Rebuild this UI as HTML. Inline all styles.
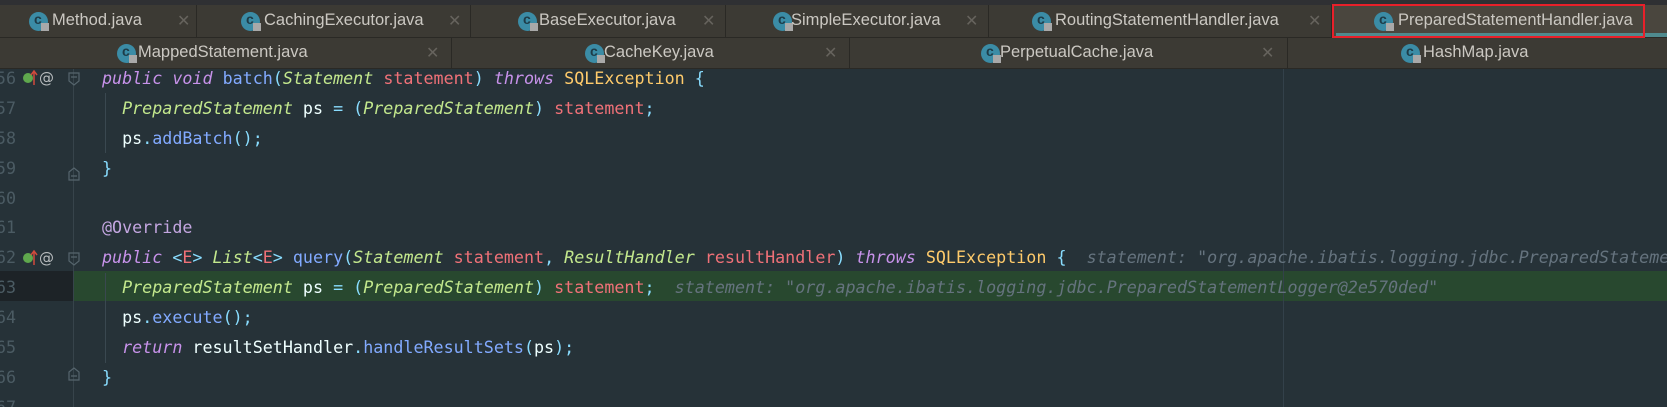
<!DOCTYPE html>
<html><head><meta charset="utf-8"><style>
*{margin:0;padding:0;box-sizing:border-box}
body{width:1667px;height:407px;overflow:hidden;background:#263238;position:relative;font-family:"Liberation Sans",sans-serif}
.top{position:absolute;left:0;top:0;width:1667px;height:5px;background:#2f3033}
.row{position:absolute;left:0;width:1667px;background:#3c3a34;border-bottom:1px solid #2a2925}
.tab{position:absolute;top:0;height:100%;border-right:1px solid #2a2925}
.t{position:absolute;font-size:16.5px;color:#cbc8c2;white-space:nowrap}
.x{position:absolute;color:#66635d;font-size:16px}
.ic{position:absolute;width:19px;height:19px;border-radius:50%;background:#3b8ca6}
.ic::before{content:"c";position:absolute;left:5px;top:-1px;font:bold 14px "Liberation Sans",sans-serif;color:#1e3c48}
.ic::after{content:"";position:absolute;left:12px;top:11px;width:8px;height:8px;background:#a9a9a9}
.code{position:absolute;left:0;top:64px;width:1667px;height:343px;overflow:hidden;font-family:"DejaVu Sans Mono",monospace;font-size:16.7px}
.ln{height:29.9px;line-height:29.9px;white-space:pre;position:relative}
.num{position:absolute;left:-8px;width:24px;text-align:right;color:#4b5b63}
.c{position:absolute;left:102px;color:#eeffff;white-space:pre}
.k{color:#c792ea;font-style:italic}.ty{color:#c3e88d;font-style:italic}.p{color:#f07178}.m{color:#82aaff}.pu{color:#89ddff}.y{color:#ffcb6b}.h{color:#65737e;font-style:italic}
</style></head><body>
<div class="top"></div>
<div class="row" style="top:5px;height:33px">
 <div class="tab" style="left:0;width:197px"><div class="ic" style="left:29px;top:7px"></div><div class="t" style="left:52px;top:6px">Method.java</div><div class="x" style="left:177px;top:6px">✕</div></div>
 <div class="tab" style="left:197px;width:274px"><div class="ic" style="left:44px;top:7px"></div><div class="t" style="left:67px;top:6px">CachingExecutor.java</div><div class="x" style="left:251px;top:6px">✕</div></div>
 <div class="tab" style="left:471px;width:255px"><div class="ic" style="left:47px;top:7px"></div><div class="t" style="left:68px;top:6px">BaseExecutor.java</div><div class="x" style="left:231px;top:6px">✕</div></div>
 <div class="tab" style="left:726px;width:263px"><div class="ic" style="left:47px;top:7px"></div><div class="t" style="left:65px;top:6px">SimpleExecutor.java</div><div class="x" style="left:239px;top:6px">✕</div></div>
 <div class="tab" style="left:989px;width:343px"><div class="ic" style="left:43px;top:7px"></div><div class="t" style="left:66px;top:6px">RoutingStatementHandler.java</div><div class="x" style="left:319px;top:6px">✕</div></div>
 <div class="tab" style="left:1332px;width:335px;background:#4a463e;border:none"><div style="position:absolute;left:4px;right:0;bottom:0;height:4px;background:#4f8a8e"></div><div class="ic" style="left:42px;top:7px"></div><div class="t" style="left:66px;top:6px">PreparedStatementHandler.java</div></div>
</div>
<div style="position:absolute;left:1332px;top:4px;width:313px;height:34px;border:2px solid #e8202a"></div>
<div class="row" style="top:38px;height:31px">
 <div class="tab" style="left:0;width:452px"><div class="ic" style="left:117px;top:6px"></div><div class="t" style="left:138px;top:5px">MappedStatement.java</div><div class="x" style="left:426px;top:5px">✕</div></div>
 <div class="tab" style="left:452px;width:398px"><div class="ic" style="left:133px;top:6px"></div><div class="t" style="left:152px;top:5px">CacheKey.java</div><div class="x" style="left:372px;top:5px">✕</div></div>
 <div class="tab" style="left:850px;width:438px"><div class="ic" style="left:131px;top:6px"></div><div class="t" style="left:150px;top:5px">PerpetualCache.java</div><div class="x" style="left:411px;top:5px">✕</div></div>
 <div class="tab" style="left:1288px;width:379px;border:none"><div class="ic" style="left:113px;top:6px"></div><div class="t" style="left:135px;top:5px">HashMap.java</div></div>
</div>
<div style="position:absolute;left:0;top:271px;width:73px;height:30px;background:#1d2327"></div>
<div style="position:absolute;left:73px;top:271px;width:1594px;height:30px;background:#28482f"></div>
<div style="position:absolute;left:73px;top:69px;width:1px;height:338px;background:#37444b"></div>
<div style="position:absolute;left:1283px;top:69px;width:1px;height:338px;background:#33414a"></div>
<div style="position:absolute;left:105px;top:93px;width:1px;height:60px;background:#3a4850"></div>
<div style="position:absolute;left:105px;top:273px;width:1px;height:90px;background:#3a4850"></div>
<svg style="position:absolute;left:0;top:63px" width="100" height="330">
 <g fill="none" stroke="#56656d" stroke-width="1.2"><path d="M69 10h10v8l-5 4l-5-4z M71 14h6"/><path d="M69 109l5-4l5 4v8h-10z M71 113h6"/><path d="M69 190h10v8l-5 4l-5-4z M71 194h6"/><path d="M69 309l5-4l5 4v8h-10z M71 313h6"/></g>
 <circle cx="28" cy="15" r="5" fill="#5fa84d"/><circle cx="28" cy="195" r="5" fill="#5fa84d"/>
 <path d="M34 22v-13M31 12l3-4l3 4" stroke="#d04a3c" stroke-width="1.5" fill="none"/><path d="M34 202v-13M31 192l3-4l3 4" stroke="#d04a3c" stroke-width="1.5" fill="none"/>
 <text x="39" y="20" fill="#b8bcbe" font-family="DejaVu Sans" font-size="15">@</text><text x="39" y="200" fill="#b8bcbe" font-family="DejaVu Sans" font-size="15">@</text>
</svg>
<div class="code">
<div class="ln"><span class="num">56</span><span class="c"><span class="k">public void</span> <span class="m">batch</span><span class="pu">(</span><span class="ty">Statement</span> <span class="p">statement</span><span class="pu">)</span> <span class="k">throws</span> <span class="y">SQLException</span> <span class="pu">{</span></span></div>
<div class="ln"><span class="num">57</span><span class="c">  <span class="ty">PreparedStatement</span> ps <span class="pu">=</span> <span class="pu">(</span><span class="ty">PreparedStatement</span><span class="pu">)</span> <span class="p">statement</span><span class="pu">;</span></span></div>
<div class="ln"><span class="num">58</span><span class="c">  ps<span class="pu">.</span><span class="m">addBatch</span><span class="pu">();</span></span></div>
<div class="ln"><span class="num">59</span><span class="c"><span class="pu">}</span></span></div>
<div class="ln"><span class="num">60</span></div>
<div class="ln"><span class="num">61</span><span class="c"><span style="color:#c3a6e0">@Override</span></span></div>
<div class="ln"><span class="num">62</span><span class="c"><span class="k">public</span> <span class="pu">&lt;</span><span class="p">E</span><span class="pu">&gt;</span> <span class="ty">List</span><span class="pu">&lt;</span><span class="p">E</span><span class="pu">&gt;</span> <span class="m">query</span><span class="pu">(</span><span class="ty">Statement</span> <span class="p">statement</span><span class="pu">,</span> <span class="ty">ResultHandler</span> <span class="p">resultHandler</span><span class="pu">)</span> <span class="k">throws</span> <span class="y">SQLException</span> <span class="pu">{</span>  <span class="h">statement: "org.apache.ibatis.logging.jdbc.PreparedStatementLogger@2e570ded"</span></span></div>
<div class="ln"><span class="num">63</span><span class="c">  <span class="ty">PreparedStatement</span> ps <span class="pu">=</span> <span class="pu">(</span><span class="ty">PreparedStatement</span><span class="pu">)</span> <span class="p">statement</span><span class="pu">;</span>  <span class="h">statement: "org.apache.ibatis.logging.jdbc.PreparedStatementLogger@2e570ded"</span></span></div>
<div class="ln"><span class="num">64</span><span class="c">  ps<span class="pu">.</span><span class="m">execute</span><span class="pu">();</span></span></div>
<div class="ln"><span class="num">65</span><span class="c">  <span class="k">return</span> resultSetHandler<span class="pu">.</span><span class="m">handleResultSets</span><span class="pu">(</span>ps<span class="pu">);</span></span></div>
<div class="ln"><span class="num">66</span><span class="c"><span class="pu">}</span></span></div>
<div class="ln"><span class="num">67</span></div>
</div>
</body></html>
